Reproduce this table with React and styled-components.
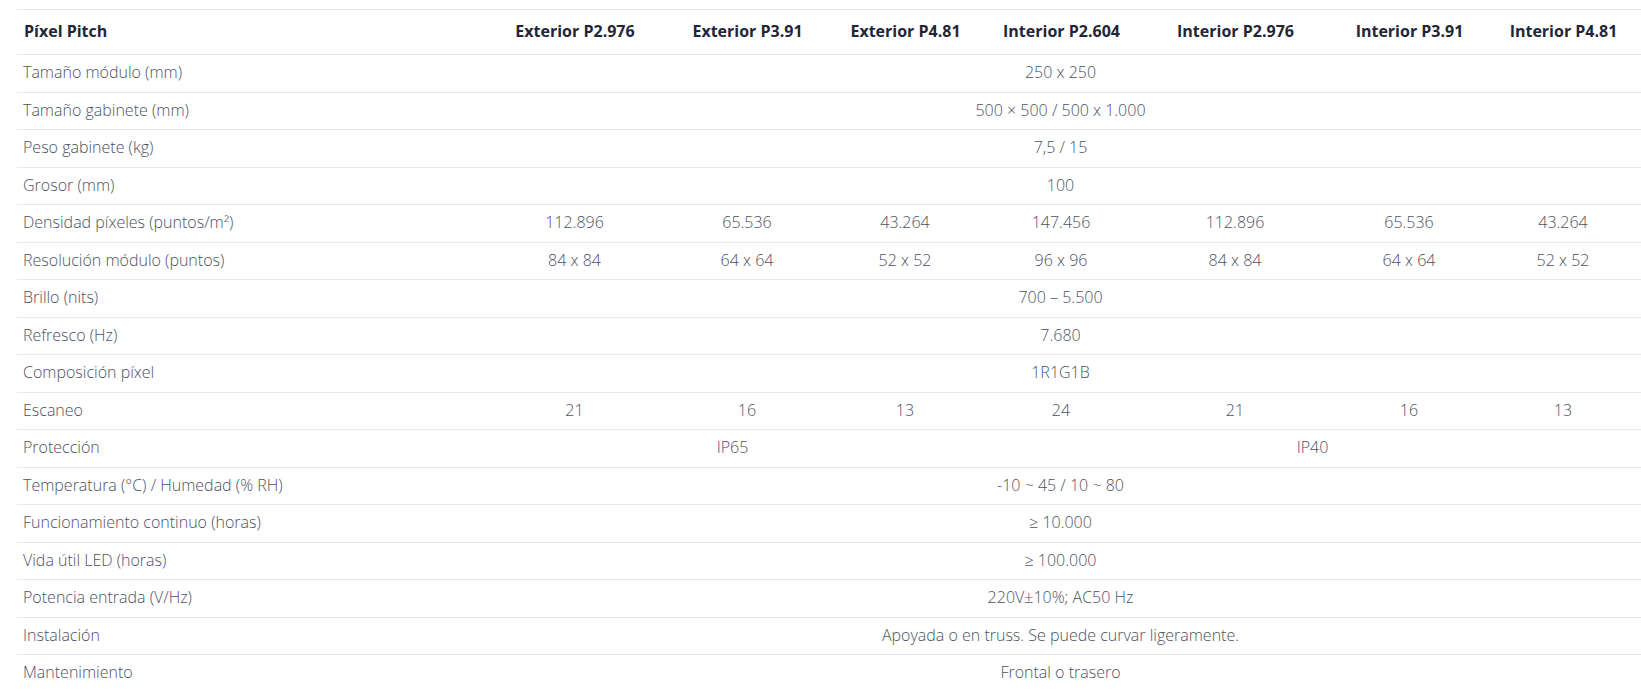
import React from "react";
import styled, { createGlobalStyle } from "styled-components";

const GlobalStyle = createGlobalStyle`
  html, body {
    margin: 0;
    padding: 0;
    background: #ffffff;
  }
  body {
    font-family: "Open Sans", "Noto Sans", "Liberation Sans", sans-serif;
    overflow: hidden;
  }
`

export const PageArea = styled.div`
  padding: 9px 0 0 17px;
  background-color: #ffffff;
`

export const Table = styled.table`
  width: 1624px;
  table-layout: fixed;
  border-collapse: collapse;
  border-top: 1px solid #e6e8eb;

  caption {
    display: none;
  }
`

export const Tr = styled.tr`
  border-bottom: 1px solid #e6e8eb;
`

export const Th = styled.th`
  padding: 10px 7px 12px;
  font-size: 16px;
  line-height: 22px;
  font-weight: 700;
  color: #1f2638;
  text-align: ${(props) => (props.$left ? "left" : "center")};
  white-space: nowrap;
`

export const Td = styled.td`
  padding: 7px 7px 8px 6px;
  font-size: 16px;
  line-height: 21.5px;
  font-weight: 300;
  color: #4b5263;
  text-align: ${(props) => (props.$left ? "left" : "center")};
  white-space: nowrap;
`

const widths = [464, 188, 157, 159, 153, 195, 153, 155];

const headers = [
  "Exterior P2.976",
  "Exterior P3.91",
  "Exterior P4.81",
  "Interior P2.604",
  "Interior P2.976",
  "Interior P3.91",
  "Interior P4.81",
];

// each value is [text, colSpan]
const rows = [
  ["Tamaño módulo (mm)", [["250 x 250", 7]]],
  ["Tamaño gabinete (mm)", [["500 × 500 / 500 x 1.000", 7]]],
  ["Peso gabinete (kg)", [["7,5 / 15", 7]]],
  ["Grosor (mm)", [["100", 7]]],
  ["Densidad píxeles (puntos/m²)", ["112.896", "65.536", "43.264", "147.456", "112.896", "65.536", "43.264"].map((v) => [v, 1])],
  ["Resolución módulo (puntos)", ["84 x 84", "64 x 64", "52 x 52", "96 x 96", "84 x 84", "64 x 64", "52 x 52"].map((v) => [v, 1])],
  ["Brillo (nits)", [["700 – 5.500", 7]]],
  ["Refresco (Hz)", [["7.680", 7]]],
  ["Composición píxel", [["1R1G1B", 7]]],
  ["Escaneo", ["21", "16", "13", "24", "21", "16", "13"].map((v) => [v, 1])],
  ["Protección", [["IP65", 3], ["IP40", 4]]],
  ["Temperatura (°C) / Humedad (% RH)", [["-10 ~ 45 / 10 ~ 80", 7]]],
  ["Funcionamiento continuo (horas)", [["≥ 10.000", 7]]],
  ["Vida útil LED (horas)", [["≥ 100.000", 7]]],
  ["Potencia entrada (V/Hz)", [["220V±10%; AC50 Hz", 7]]],
  ["Instalación", [["Apoyada o en truss. Se puede curvar ligeramente.", 7]]],
  ["Mantenimiento", [["Frontal o trasero", 7]]],
];

const SpecsTable = () => {
  return (
    <PageArea>
      <Table>
        <caption>Especificaciones pantallas LED</caption>
        <colgroup>
          {widths.map((w, i) => (
            <col key={i} style={{ width: w }} />
          ))}
        </colgroup>
        <thead>
          <Tr>
            <Th $left>Píxel Pitch</Th>
            {headers.map((h) => (
              <Th key={h}>{h}</Th>
            ))}
          </Tr>
        </thead>
        <tbody>
          {rows.map(([label, values]) => (
            <Tr key={label}>
              <Td $left>{label}</Td>
              {values.map(([v, span], i) => (
                <Td key={i} colSpan={span}>{v}</Td>
              ))}
            </Tr>
          ))}
        </tbody>
      </Table>
    </PageArea>
  )
}

const App = () => (
  <>
    <GlobalStyle />
    <SpecsTable />
  </>
)

export default App
